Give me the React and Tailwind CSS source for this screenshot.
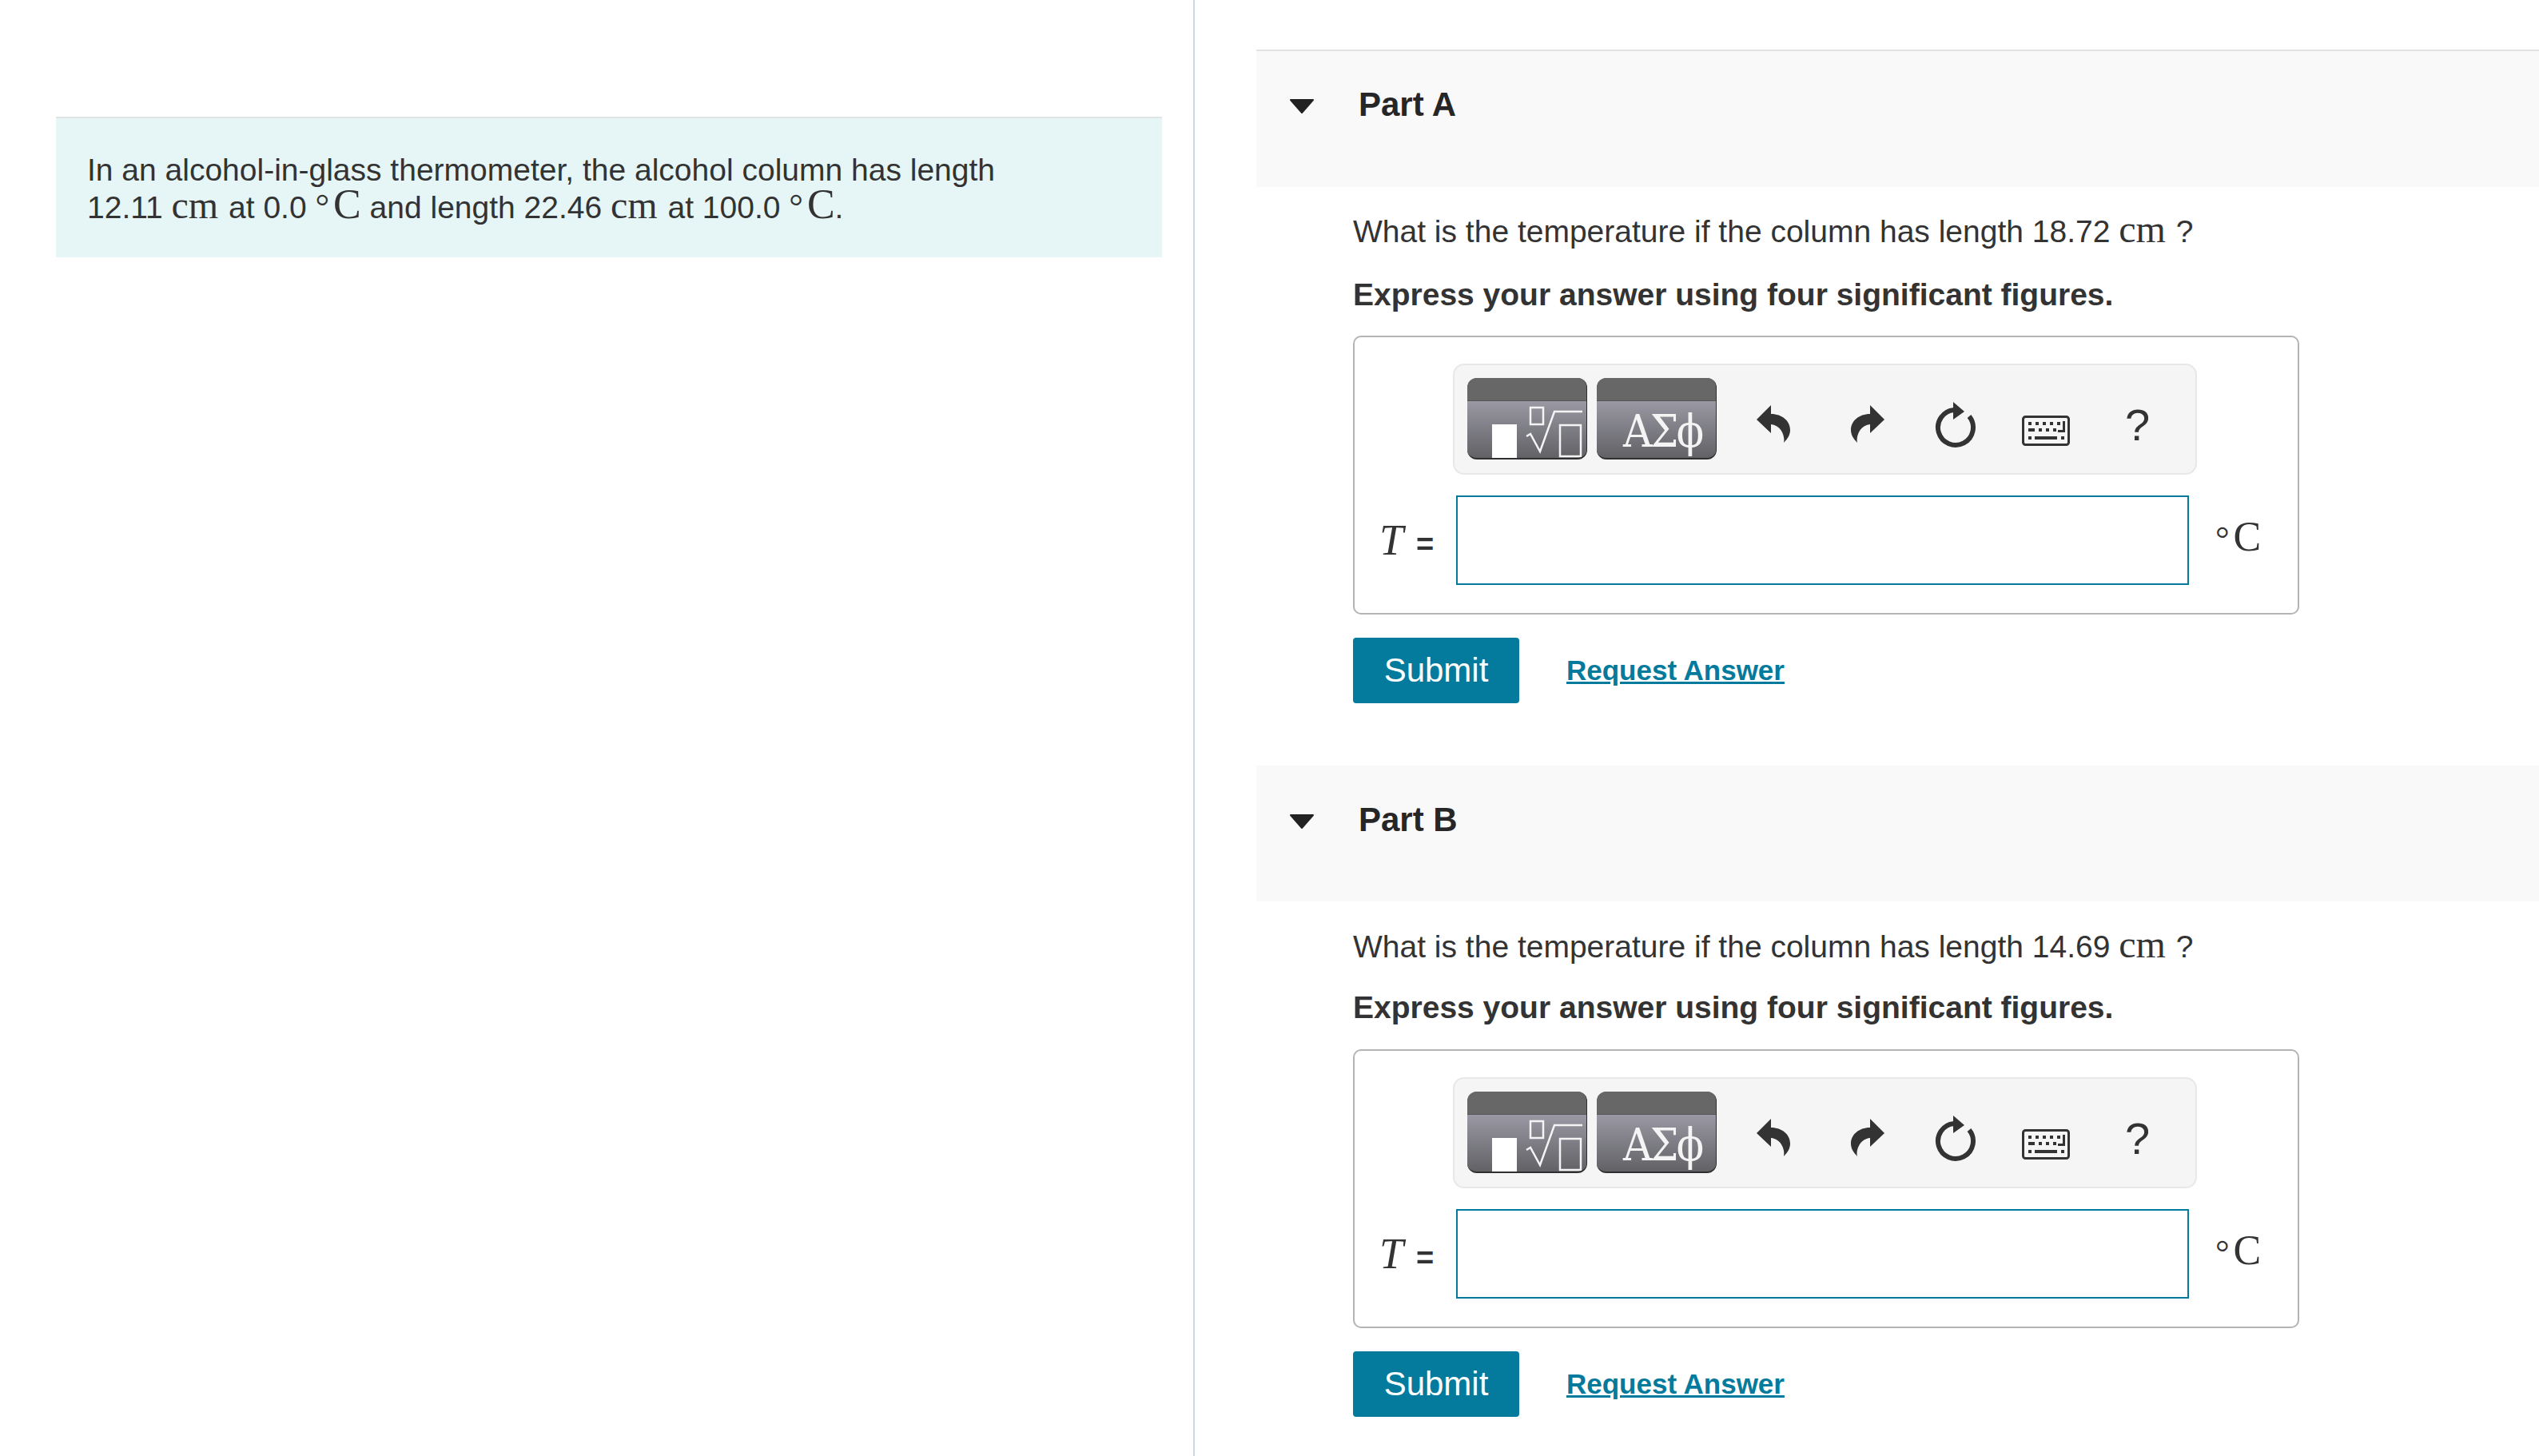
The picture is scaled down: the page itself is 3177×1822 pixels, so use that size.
const SANS = 'font-["Liberation_Sans",Arial,sans-serif]'

function Cm() {
  return <span className='font-["Liberation_Serif",serif] text-[48px] leading-[0] mr-[2px]'>cm</span>
}

function Celsius() {
  return (
    <span className='font-["Liberation_Serif",serif] leading-[0]'>
      <span className="text-[44px] leading-[0]">°</span>
      <span className="text-[52px] leading-[0] ml-[5px]">C</span>
    </span>
  )
}

function Undo({ flip }) {
  return (
    <svg width="43" height="48" viewBox="0 0 43 48" className={flip ? '-scale-x-100' : ''}>
      <path d="M0 18 L18 0 V11 C32 11 42 20 42 31 C42 37 39 42 34 47 C36 38 30 25 18 24 V35 Z" fill="#333" />
    </svg>
  )
}

function Reload() {
  return (
    <svg width="52" height="58" viewBox="0 0 52 58">
      <path d="M43 18 A22 22 0 1 1 24 10" fill="none" stroke="#333" strokeWidth="6" />
      <path d="M23 0 L37 12 L23 22 Z" fill="#333" />
    </svg>
  )
}

function Keyboard() {
  const top = [8, 17, 26, 35, 44]
  const mid = [21, 30, 39]
  return (
    <svg width="60" height="38" viewBox="0 0 60 38">
      <rect x="1.5" y="1.5" width="57" height="35" rx="3" fill="none" stroke="#333" strokeWidth="3" />
      {top.map(x => <rect key={x} x={x} y="8" width="4" height="4" fill="#333" />)}
      <path d="M51 7 h3 v14 h-9 v-3 h6 z" fill="#333" />
      <rect x="8" y="16" width="8" height="4" fill="#333" />
      {mid.map(x => <rect key={x} x={x} y="16" width="4" height="4" fill="#333" />)}
      <rect x="8" y="26" width="4" height="4" fill="#333" />
      <rect x="16" y="26" width="28" height="4" fill="#333" />
      <rect x="49" y="26" width="4" height="4" fill="#333" />
    </svg>
  )
}

function ToolButton({ children }) {
  return (
    <div className="w-[150px] h-[102px] rounded-[12px] overflow-hidden flex flex-col border-b-2 border-r border-[#2f2f2f] bg-[#666]">
      <div className="h-[29px] bg-[#676767] border-b border-[#555]" />
      <div className="flex-1 relative bg-linear-to-b from-[#9a99a4] to-[#626266]">{children}</div>
    </div>
  )
}

function Templates() {
  return (
    <ToolButton>
      <div className="absolute left-[31px] bottom-0 w-[31px] h-[42px] bg-white" />
      <svg width="80" height="72" viewBox="0 0 80 72" className="absolute left-[70px] top-0">
        <g fill="none" stroke="#f4f4f4" strokeWidth="2.5">
          <rect x="9" y="8" width="16" height="21" />
          <path d="M4 44 L9 41 L21 63 L39 13 H74" />
          <rect x="46" y="30" width="26" height="39" />
        </g>
      </svg>
    </ToolButton>
  )
}

function AnswerBox() {
  return (
    <div className="w-[1184px] h-[349px] border-2 border-[#b4b4b4] rounded-[10px] pt-[33px] pl-[123px]">
      <div className="w-[931px] h-[139px] bg-[#f5f5f5] border-2 border-[#e8e8e8] rounded-[14px] flex items-start pl-[16px]">
        <div className="flex gap-[12px] mt-[16px]">
          <Templates />
          <ToolButton>
            <span className='absolute left-[33px] bottom-[1px] text-[56px] leading-[64px] text-[#f4f4f4] font-["DejaVu_Serif","Liberation_Serif",serif] tracking-[-3px] whitespace-nowrap scale-x-90 origin-left'>ΑΣϕ</span>
          </ToolButton>
        </div>
        <div className="ml-[50px] mt-[50px]"><Undo /></div>
        <div className="ml-[74px] mt-[50px]"><Undo flip /></div>
        <div className="ml-[63px] mt-[46px]"><Reload /></div>
        <div className="ml-[57px] mt-[63px]"><Keyboard /></div>
        <span className="ml-[69px] mt-[47px] text-[56px] leading-none text-[#333]">?</span>
      </div>
      <div className="flex items-center mt-[26px] -ml-[92px]">
        <span className="w-[96px] whitespace-nowrap flex items-baseline">
          <span className='font-["Liberation_Serif",serif] italic text-[54px] leading-none'>T</span>
          <span className="ml-[16px] text-[38px] font-bold leading-none">=</span>
        </span>
        <div className="w-[917px] h-[112px] border-2 border-[#047a9c] bg-white" />
        <span className="ml-[33px] mt-[16px] text-[#333]"><Celsius /></span>
      </div>
    </div>
  )
}

function Part({ label, length, head, gap, boxGap, answerGap }) {
  return (
    <section>
      <div className={`${head} bg-[#f9f9f9] border-[#e2e2e2] flex items-start`}>
        <svg width="34" height="20" viewBox="0 0 34 20" className="ml-[40px] mt-[15px]">
          <path d="M3 2 H31 L17 18 Z" fill="#222" stroke="#222" strokeWidth="2" strokeLinejoin="round" />
        </svg>
        <h2 className="ml-[54px] text-[42px] leading-[46px] font-bold text-[#262626]">{label}</h2>
      </div>
      <div className="pl-[121px]">
        <p className={`${gap} text-[39px] leading-[48px] whitespace-nowrap`}>
          What is the temperature if the column has length {length} <Cm /> ?
        </p>
        <p className={`${boxGap} text-[39px] leading-[48px] font-bold whitespace-nowrap`}>
          Express your answer using four significant figures.
        </p>
        <div className={answerGap}><AnswerBox /></div>
        <div className="flex items-center mt-[29px]">
          <button className="w-[208px] h-[82px] bg-[#047a9c] rounded-[4px] text-white text-[42px] leading-none">Submit</button>
          <a className="ml-[59px] text-[35px] font-bold text-[#047a9c] underline">Request Answer</a>
        </div>
      </div>
    </section>
  )
}

export default function App() {
  return (
    <div className={`${SANS} w-[3177px] h-[1822px] overflow-hidden bg-white text-[#333] flex`}>
      <div className="w-[1495px] shrink-0 border-r-2 border-[#c9d9ec] pl-[70px] pr-[39px] pt-[146px]">
        <div className="h-[176px] bg-[#e6f6f6] border-t-2 border-[#e0e4e4] pl-[39px] pt-[41px] text-[39px] leading-[47px]">
          <p className="whitespace-nowrap">In an alcohol-in-glass thermometer, the alcohol column has length</p>
          <p className="whitespace-nowrap">
            12.11 <Cm /> at 0.0 <Celsius /> and length 22.46 <Cm /> at 100.0 <Celsius />.
          </p>
        </div>
      </div>
      <div className="flex-1 pl-[77px] pt-[62px]">
        <Part label="Part A" length="18.72" head="h-[172px] border-t-2 pt-[44px]" gap="mt-[32px]" boxGap="mt-[31px]" answerGap="mt-[27px]" />
        <div className="h-[78px]" />
        <Part label="Part B" length="14.69" head="h-[170px] pt-[45px]" gap="mt-[33px]" boxGap="mt-[28px]" answerGap="mt-[28px]" />
      </div>
    </div>
  )
}
